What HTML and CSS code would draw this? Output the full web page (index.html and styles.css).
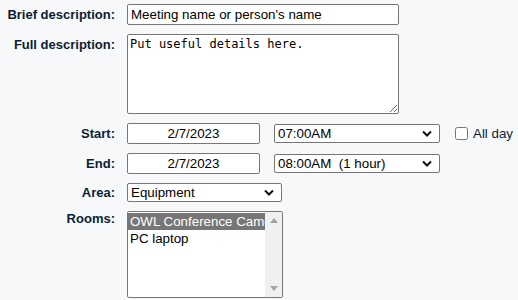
FILE: index.html
```html
<!DOCTYPE html>
<html lang="en">
<head>
<meta charset="UTF-8">
<meta name="viewport" content="width=device-width, initial-scale=1.0">
<title>Edit entry</title>
<link rel="stylesheet" href="styles.css">
</head>
<body>
<form class="entry">
<label for="name" class="lbl">Brief description:</label>
<div class="field"><input id="name" class="txt" value="Meeting name or person's name"></div>

<label for="desc" class="lbl lbl-desc">Full description:</label>
<div class="field"><textarea id="desc" class="area">Put useful details here.</textarea></div>

<label for="start" class="lbl">Start:</label>
<div class="field">
<input id="start" class="date" value="2/7/2023">
<span class="sel sel-time">
<select class="time"><option>07:00AM</option></select>
<svg class="chev" width="10" height="7" viewBox="0 0 10 7"><path d="M1 1.5 L5 5.5 L9 1.5" fill="none" stroke="#111" stroke-width="2"/></svg>
</span>
<label class="allday"><input type="checkbox"> All day</label>
</div>

<label for="end" class="lbl">End:</label>
<div class="field">
<input id="end" class="date" value="2/7/2023">
<span class="sel sel-time">
<select class="time"><option>08:00AM&nbsp;&nbsp;(1 hour)</option></select>
<svg class="chev" width="10" height="7" viewBox="0 0 10 7"><path d="M1 1.5 L5 5.5 L9 1.5" fill="none" stroke="#111" stroke-width="2"/></svg>
</span>
</div>

<label for="areaSel" class="lbl">Area:</label>
<div class="field">
<span class="sel">
<select id="areaSel" class="areasel"><option>Equipment</option><option>Rooms</option></select>
<svg class="chev" width="10" height="7" viewBox="0 0 10 7"><path d="M1 1.5 L5 5.5 L9 1.5" fill="none" stroke="#111" stroke-width="2"/></svg>
</span>
</div>

<span class="lbl lbl-rooms">Rooms:</span>
<div class="field">
<div class="rooms" role="listbox" aria-multiselectable="true">
<div class="opts">
<div class="opt on" role="option" aria-selected="true">OWL Conference Camera</div>
<div class="opt" role="option">PC laptop</div>
</div>
<div class="sbar">
<svg width="8" height="5" viewBox="0 0 8 5"><path d="M0 5 L4 0 L8 5 Z" fill="#a3a3a3"/></svg>
<svg width="8" height="5" viewBox="0 0 8 5"><path d="M0 0 L4 5 L8 0 Z" fill="#a3a3a3"/></svg>
</div>
</div>
</div>
</form>
</body>
</html>
```
FILE: styles.css
```css
/* page */
html,body{margin:0;padding:0;background:#f7f8fa;}
body{font-family:"Liberation Sans",Arial,sans-serif;font-size:13px;color:#0b1e33;}

/* form grid */
.entry{display:grid;grid-template-columns:115px auto;column-gap:12px;row-gap:9px;padding:4px 0 0 0;align-items:center;}
.lbl{font-weight:bold;text-align:right;white-space:nowrap;}
.lbl-desc{align-self:start;padding-top:3px;}
.lbl-rooms{align-self:start;padding-top:0;}
.field{display:flex;align-items:center;}

/* controls */
input,select,textarea{font-family:"Liberation Sans",Arial,sans-serif;font-size:13.33px;color:#000;background:#fff;border:1px solid #767676;border-radius:2px;margin:0;box-sizing:border-box;}
.txt{width:272px;height:21px;padding:1px 3px;}
.area{width:272px;height:80px;padding:2px 2px;font-family:"DejaVu Sans Mono",monospace;font-size:12px;resize:both;}
.date{width:133px;height:21px;text-align:center;padding:1px 2px;}

/* selects with chevron */
.sel{position:relative;display:inline-flex;}
.sel-time{margin-left:14px;}
.sel select{appearance:none;-webkit-appearance:none;height:19px;padding:0 0 0 3px;}
.chev{position:absolute;right:8px;top:6px;pointer-events:none;}
.time{width:166px;}
.areasel{width:155px;}

.allday{display:flex;align-items:center;margin-left:15px;color:#0b1e33;font-size:13.33px;}
.allday input{width:13px;height:13px;margin:0 5px 0 0;}

/* rooms listbox */
.rooms{display:flex;width:156px;height:87px;background:#fff;border:1px solid #767676;border-radius:2px;box-sizing:border-box;overflow:hidden;font-size:13.33px;color:#000;}
.opts{flex:1;min-width:0;padding-top:1px;}
.opt{height:17px;line-height:17px;padding:0 2px;white-space:nowrap;overflow:hidden;}
.opt.on{background:#767676;color:#fff;}
.sbar{width:17px;background:#f0f0f0;display:flex;flex-direction:column;justify-content:space-between;align-items:center;padding:6px 0;box-sizing:border-box;}
```
